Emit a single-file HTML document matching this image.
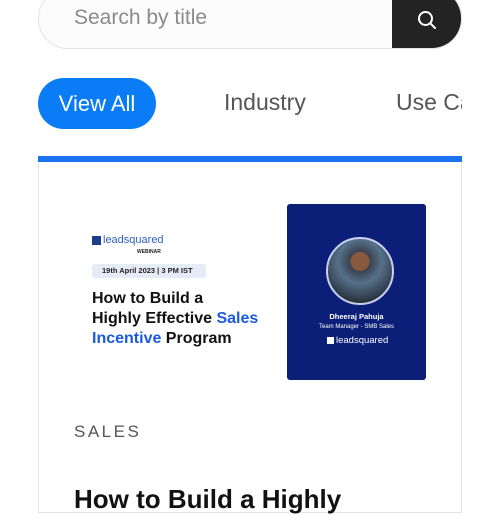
<!DOCTYPE html>
<html><head><style>
body{margin:0;width:500px;height:500px;overflow:hidden;background:#fff;font-family:"Liberation Sans",sans-serif;position:relative}
.a{position:absolute}
</style></head><body>
<div class="a" style="left:38px;top:-12px;width:422px;height:59px;border:1px solid #e2e2e6;border-radius:30px;background:#fcfcfc;overflow:hidden">
 <div class="a" style="left:35px;top:17px;font-size:21px;color:#8a8a8a">Search by title</div>
 <div class="a" style="right:0;top:0;width:69px;height:59px;background:#232323"></div>
 <svg class="a" style="left:377px;top:20px" width="22" height="22" viewBox="0 0 22 22"><circle cx="9.5" cy="9.5" r="6.5" fill="none" stroke="#fff" stroke-width="2"/><path d="M14.3 14.3 L19 19" stroke="#fff" stroke-width="2" stroke-linecap="round"/></svg>
</div>
<div class="a" style="left:38px;top:78px;width:118px;height:51px;border-radius:26px;background:#0a7cf5;color:#fff;font-size:22px;line-height:51px;text-align:center">View All</div>
<div class="a" style="left:224px;top:89px;font-size:23px;color:#555">Industry</div>
<div class="a" style="left:396px;top:89px;width:66px;overflow:hidden;white-space:nowrap;font-size:23px;color:#555">Use Cases</div>
<div class="a" style="left:38px;top:156px;width:424px;height:6px;background:#1a73f0"></div>
<div class="a" style="left:38px;top:162px;width:422px;height:350px;border:1px solid #e4e4e4;border-top:none"></div>
<div class="a" style="left:92px;top:236px;width:9px;height:9px;background:#1c3c8c"></div>
<div class="a" style="left:103px;top:234px;font-size:11px;color:#3060c0">leadsquared</div>
<div class="a" style="left:137px;top:249px;font-size:5px;font-weight:bold;color:#222">WEBINAR</div>
<div class="a" style="left:92px;top:264px;width:114px;height:14px;background:#e6ebf8;border-radius:3px;font-size:7.5px;font-weight:bold;line-height:14px;color:#222;text-indent:10px">19th April 2023 | 3 PM IST</div>
<div class="a" style="left:92px;top:289px;font-size:16px;font-weight:bold;line-height:20px;color:#111;white-space:nowrap">How to Build a<br>Highly Effective <span style="color:#1a5ae0">Sales</span><br><span style="color:#1a5ae0">Incentive</span> Program</div>
<div class="a" style="left:287px;top:204px;width:139px;height:176px;background:#0c1f78;border-radius:3px"></div>
<div class="a" style="left:326px;top:237px;width:64px;height:64px;border-radius:50%;border:2px solid #c8d0ee;background:radial-gradient(circle at 50% 35%,#8a5a40 0 9px,#3a4250 10px,#56718a 22px,#2a3440 40px)"></div>
<div class="a" style="left:287px;top:312px;width:139px;text-align:center;font-size:7.5px;font-weight:bold;color:#fff">Dheeraj Pahuja</div>
<div class="a" style="left:287px;top:324px;width:139px;text-align:center;font-size:6px;color:#fff">Team Manager - SMB Sales</div>
<div class="a" style="left:327px;top:337px;width:7px;height:7px;background:#fff"></div>
<div class="a" style="left:336px;top:335px;font-size:9.5px;color:#fff">leadsquared</div>
<div class="a" style="left:74px;top:422px;font-size:17px;letter-spacing:2.5px;color:#555">SALES</div>
<div class="a" style="left:74px;top:484px;font-size:26px;font-weight:bold;color:#111;white-space:nowrap">How to Build a Highly</div>
</body></html>
